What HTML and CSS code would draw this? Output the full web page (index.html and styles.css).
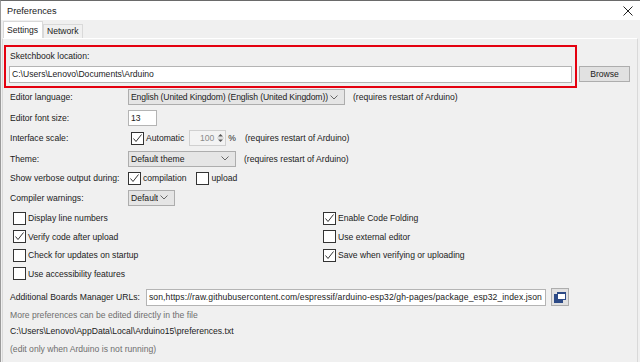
FILE: index.html
```html
<!DOCTYPE html>
<html lang="en">
<head>
    <meta charset="UTF-8">
    <title>Preferences</title>
    <link rel="stylesheet" href="styles.css">
</head>
<body>
    <div class="window">
        <div class="titlebar">
            <span class="title">Preferences</span>
            <svg class="close-icon" width="10" height="10" viewBox="0 0 10 10">
                <path d="M0.5 0.5 L9.5 9.5 M9.5 0.5 L0.5 9.5" stroke="#222" stroke-width="1" fill="none"/>
            </svg>
        </div>

        <div class="tabs">
            <div class="tab tab-active">Settings</div>
            <div class="tab">Network</div>
        </div>

        <div class="panel">
            <!-- Папка скетчей -->
            <div class="sketch-row">
                <div class="sketch-box">
                    <div class="sketch-label">Sketchbook location:</div>
                    <div class="text-field sketch-field">C:\Users\Lenovo\Documents\Arduino</div>
                </div>
                <button class="btn browse-btn">Browse</button>
            </div>

            <div class="settings-grid">
                <div class="label">Editor language:</div>
                <div class="control">
                    <div class="select select-lang">
                        <span class="select-text">English (United Kingdom) (English (United Kingdom))</span>
                        <svg class="chevron" width="8" height="5" viewBox="0 0 8 5"><path d="M0.5 0.5 L4 4 L7.5 0.5" stroke="#666" fill="none"/></svg>
                    </div>
                    <span class="note">(requires restart of Arduino)</span>
                </div>

                <div class="label">Editor font size:</div>
                <div class="control">
                    <div class="text-field font-field">13</div>
                </div>

                <div class="label">Interface scale:</div>
                <div class="control control-scale">
                    <span class="checkbox checked">
                        <svg width="11" height="11" viewBox="0 0 11 11"><path d="M1.5 5.5 L4 8.5 L9.5 1.5" stroke="#333" fill="none"/></svg>
                    </span>
                    <span class="check-text">Automatic</span>
                    <div class="spinner">
                        <span class="spinner-value">100</span>
                        <span class="spinner-arrows">
                            <svg width="7" height="12" viewBox="0 0 7 12">
                                <path d="M1 4.5 L3.5 2 L6 4.5" fill="#555"/>
                                <path d="M0 6 L7 6" stroke="#ccc"/>
                                <path d="M1 7.5 L3.5 10 L6 7.5" fill="#555"/>
                            </svg>
                        </span>
                    </div>
                    <span class="percent">%</span>
                    <span class="note">(requires restart of Arduino)</span>
                </div>

                <div class="label">Theme:</div>
                <div class="control">
                    <div class="select select-theme">
                        <span class="select-text">Default theme</span>
                        <svg class="chevron" width="8" height="5" viewBox="0 0 8 5"><path d="M0.5 0.5 L4 4 L7.5 0.5" stroke="#666" fill="none"/></svg>
                    </div>
                    <span class="note">(requires restart of Arduino)</span>
                </div>

                <div class="label">Show verbose output during:</div>
                <div class="control">
                    <span class="checkbox checked">
                        <svg width="11" height="11" viewBox="0 0 11 11"><path d="M1.5 5.5 L4 8.5 L9.5 1.5" stroke="#333" fill="none"/></svg>
                    </span>
                    <span class="check-text">compilation</span>
                    <span class="checkbox checkbox-upload"></span>
                    <span class="check-text">upload</span>
                </div>

                <div class="label">Compiler warnings:</div>
                <div class="control">
                    <div class="select select-warn">
                        <span class="select-text">Default</span>
                        <svg class="chevron" width="8" height="5" viewBox="0 0 8 5"><path d="M0.5 0.5 L4 4 L7.5 0.5" stroke="#666" fill="none"/></svg>
                    </div>
                </div>
            </div>

            <!-- Флажки -->
            <div class="options-grid">
                <label class="option"><span class="checkbox"></span>Display line numbers</label>
                <label class="option"><span class="checkbox checked"><svg width="11" height="11" viewBox="0 0 11 11"><path d="M1.5 5.5 L4 8.5 L9.5 1.5" stroke="#333" fill="none"/></svg></span>Enable Code Folding</label>
                <label class="option"><span class="checkbox checked"><svg width="11" height="11" viewBox="0 0 11 11"><path d="M1.5 5.5 L4 8.5 L9.5 1.5" stroke="#333" fill="none"/></svg></span>Verify code after upload</label>
                <label class="option"><span class="checkbox"></span>Use external editor</label>
                <label class="option"><span class="checkbox"></span>Check for updates on startup</label>
                <label class="option"><span class="checkbox checked"><svg width="11" height="11" viewBox="0 0 11 11"><path d="M1.5 5.5 L4 8.5 L9.5 1.5" stroke="#333" fill="none"/></svg></span>Save when verifying or uploading</label>
                <label class="option"><span class="checkbox"></span>Use accessibility features</label>
            </div>

            <div class="urls-row">
                <span class="urls-label">Additional Boards Manager URLs:</span>
                <div class="text-field urls-field">
                    <span class="urls-text">son,https://raw.githubusercontent.com/espressif/arduino-esp32/gh-pages/package_esp32_index.json</span>
                </div>
                <button class="btn icon-btn">
                    <svg width="12" height="11" viewBox="0 0 12 11">
                        <rect x="0" y="2" width="9" height="9" fill="#2c4a86"/>
                        <rect x="3" y="0" width="9" height="8" fill="#2c4a86"/>
                        <rect x="4" y="2" width="7" height="5" fill="#fff"/>
                    </svg>
                </button>
            </div>

            <div class="footer">
                <p class="hint">More preferences can be edited directly in the file</p>
                <p class="path">C:\Users\Lenovo\AppData\Local\Arduino15\preferences.txt</p>
                <p class="hint">(edit only when Arduino is not running)</p>
            </div>
        </div>
    </div>
</body>
</html>
```

FILE: styles.css
```css
* {
    margin: 0;
    padding: 0;
    box-sizing: border-box;
}

body {
    font-family: "Liberation Sans", Arial, sans-serif;
    font-size: 8.6px;
    color: #1b1b1b;
    background: #f0f0f0;
    width: 640px;
    height: 362px;
    overflow: hidden;
}

.window {
    height: 362px;
    border-top: 1px solid #6a6a6a;
    border-left: 1px solid #9a9a9a;
    display: flex;
    flex-direction: column;
}

.titlebar {
    height: 19px;
    background: #fff;
    display: flex;
    align-items: center;
    justify-content: space-between;
    padding: 0 7px 0 6px;
    font-size: 9.2px;
}

.close-icon {
    display: block;
}

/* Вкладки */
.tabs {
    display: flex;
    align-items: flex-end;
    height: 18px;
    padding-left: 2px;
}

.tab {
    height: 14px;
    line-height: 13px;
    padding: 0 3px;
    border: 1px solid #d9d9d9;
    border-bottom: none;
    background: #f0f0f0;
}

.tab-active {
    height: 17px;
    line-height: 16px;
    width: 40px;
    background: #fff;
    padding-left: 3px;
}

.panel {
    flex: 1;
    margin-left: 1px;
    width: 636px;
    border: 1px solid #d9d9d9;
    border-bottom: none;
    border-top-color: #fff;
}

/* Папка скетчей */
.sketch-row {
    display: flex;
    align-items: flex-end;
    margin-top: 6px;
}

.sketch-box {
    flex: 1;
    margin-left: 1px;
    border: 2px solid #e4000f;
    padding: 3px;
}

.sketch-label {
    line-height: 12px;
    padding-left: 1px;
    margin-bottom: 4px;
}

.text-field {
    background: #fff;
    border: 1px solid #b4b4b4;
    white-space: nowrap;
    overflow: hidden;
}

.sketch-field {
    height: 17px;
    line-height: 15px;
    padding-left: 2px;
}

.btn {
    font-family: inherit;
    font-size: inherit;
    color: inherit;
    background: #e1e1e1;
    border: 1px solid #adadad;
}

.browse-btn {
    width: 51px;
    height: 16px;
    margin: 0 7px 6px 2px;
}

/* Основные настройки */
.settings-grid {
    display: grid;
    grid-template-columns: 118px 1fr;
    grid-template-rows: 16px 16px 16px 16px 14px 16px;
    row-gap: 4.6px;
    margin-top: 1px;
    padding-left: 7px;
}

.label,
.control {
    display: flex;
    align-items: center;
    white-space: nowrap;
}

.select {
    height: 16px;
    display: flex;
    align-items: center;
    justify-content: space-between;
    background: #e5e5e5;
    border: 1px solid #adadad;
    padding: 0 6px 0 2px;
}

.select-text {
    overflow: hidden;
}

.select-lang {
    width: 217px;
    letter-spacing: -0.12px;
}

.select-theme {
    width: 108px;
}

.select-warn {
    width: 47px;
}

.note {
    margin-left: 8px;
}

.font-field {
    width: 29px;
    height: 16px;
    line-height: 14px;
    padding-left: 2px;
}

.checkbox {
    width: 13px;
    height: 13px;
    flex-shrink: 0;
    border: 1px solid #333;
    background: #fff;
    display: inline-flex;
    align-items: center;
    justify-content: center;
}

.check-text {
    margin-left: 2px;
}

.control-scale .checkbox {
    margin-left: 3px;
}

.spinner {
    width: 37px;
    height: 16px;
    margin-left: 5px;
    display: flex;
    align-items: center;
    justify-content: flex-end;
    border: 1px solid #d0d0d0;
    background: #f3f3f3;
    color: #8a8a8a;
}

.spinner-value {
    margin-right: 2px;
}

.spinner-arrows {
    display: flex;
    width: 9px;
    justify-content: center;
}

.percent {
    margin-left: 2px;
}

.control-scale .note {
    margin-left: 9px;
}

.checkbox-upload {
    margin-left: 10px;
}

/* Флажки */
.options-grid {
    display: grid;
    grid-template-columns: 310px 1fr;
    grid-auto-rows: 13px;
    row-gap: 5.5px;
    margin-top: 6px;
    padding-left: 10px;
}

.option {
    display: flex;
    align-items: center;
    gap: 2px;
    white-space: nowrap;
}

/* Адреса плат */
.urls-row {
    display: flex;
    align-items: center;
    margin-top: 8px;
    padding-left: 7px;
    height: 18px;
}

.urls-label {
    width: 136px;
    flex-shrink: 0;
    white-space: nowrap;
}

.urls-field {
    width: 400px;
    flex-shrink: 0;
    height: 17px;
    display: flex;
    align-items: center;
    justify-content: flex-end;
    padding: 0 3px 0 2px;
}

.urls-text {
    letter-spacing: 0.1px;
}

.icon-btn {
    width: 18px;
    height: 18px;
    margin-left: 5px;
    display: flex;
    align-items: center;
    justify-content: center;
}

.footer {
    padding-left: 7px;
    margin-top: 3px;
}

.footer p {
    line-height: 12px;
    margin-bottom: 4px;
}

.hint {
    color: #6e6e6e;
}

.footer .path {
    margin-bottom: 6px;
}
```
